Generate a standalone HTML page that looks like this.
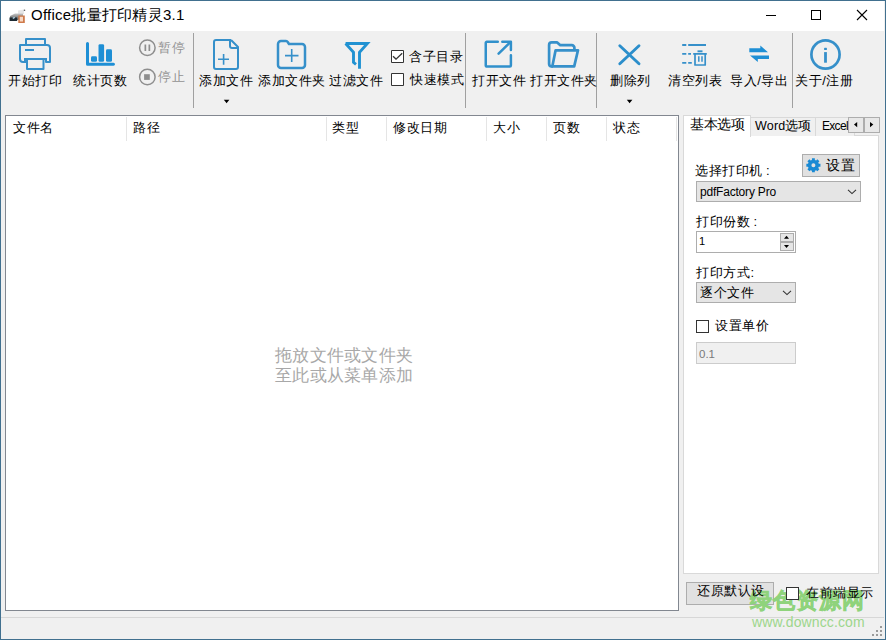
<!DOCTYPE html>
<html><head><meta charset="utf-8">
<style>
*{box-sizing:border-box;margin:0;padding:0}
html,body{width:886px;height:640px;overflow:hidden;background:#f0f0f0}
body{position:relative;font-family:"Liberation Sans",sans-serif;color:#000}
.a{position:absolute}
.t{position:absolute;white-space:nowrap;font-size:13px;line-height:16px;letter-spacing:0.6px}
.ico{position:absolute;overflow:visible}
</style></head><body>
<!-- window border -->
<div class="a" style="left:0;top:0;width:886px;height:640px;border:1px solid #41708f;"></div>
<!-- title bar -->
<div class="a" style="left:1px;top:1px;width:883px;height:30px;background:#fff"></div>
<svg class="a" style="left:0;top:0" width="30" height="30" viewBox="0 0 30 30">
<defs><linearGradient id="pg" x1="0" y1="0" x2="0" y2="1"><stop offset="0" stop-color="#c8c8c8"/><stop offset="1" stop-color="#4a4a4a"/></linearGradient></defs>
<path d="M18 10.5L24 9.5V14L18 14.5Z" fill="#e6e6e6"/>
<circle cx="24.5" cy="10.3" r="0.8" fill="#555"/>
<path d="M10 16L15 13.5H23V17L17 20.5H10Z" fill="url(#pg)"/>
<path d="M9.5 17.5H17V21H9.5Z" fill="#1d2a33"/>
<path d="M12.5 17.8L14.5 16.8L15 18L13 19Z" fill="#b9d9ea"/>
<path d="M18.3 15.5H24.8V23H18.3Z" fill="#cf7a4a"/>
<path d="M19.8 16.8H23V21.5H19.8Z" fill="#f6d9c6"/>
</svg>
<div class="t" style="left:31px;top:6px;font-size:15px;line-height:18px;letter-spacing:0.25px">Office批量打印精灵3.1</div>
<!-- window controls -->
<div class="a" style="left:766px;top:15px;width:10px;height:1px;background:#000"></div>
<div class="a" style="left:811px;top:10px;width:10px;height:10px;border:1px solid #000"></div>
<svg class="ico" style="left:856px;top:9px" width="12" height="12"><path d="M1 1L11 11M11 1L1 11" stroke="#000" stroke-width="1.1"/></svg>


<svg class="a" style="left:0;top:0" width="886" height="640" viewBox="0 0 886 640">
<g fill="none" stroke-linejoin="round" stroke-linecap="butt">
<!-- printer -->
<g stroke="#3690ca" stroke-width="2">
<path d="M26 45V39H45V45"/>
<path d="M26 62H23A3 3 0 0 1 20 59V45H47A3 3 0 0 1 50 48V62H46V59"/>
<path d="M24 59H47M25 59V62"/>
<path d="M27 59V69H43.5V59"/>
<path d="M25 50H34"/>
</g>
<!-- stats -->
<g fill="#1e8fd5" stroke="none">
<path d="M86 43.5A1.5 1.5 0 0 1 89 43.5V62.7H113.5A1.5 1.5 0 0 1 113.5 65.7H87.5A1.5 1.5 0 0 1 86 64.2Z"/>
<rect x="91" y="56.2" width="6" height="5.6" rx="1.4"/>
<rect x="98.5" y="44.2" width="5.6" height="17.6" rx="1.4"/>
<rect x="106" y="49.2" width="6" height="12.6" rx="1.4"/>
</g>
<!-- pause / stop -->
<g stroke="#8e8e8e" stroke-width="1.5">
<circle cx="147.35" cy="47.8" r="7.75"/>
<circle cx="147.35" cy="77.05" r="7.75"/>
</g>
<g fill="#8e8e8e">
<rect x="144.5" y="44.5" width="1.7" height="6.5"/>
<rect x="148.5" y="44.5" width="1.7" height="6.5"/>
<rect x="144.1" y="74.2" width="5.7" height="5.7"/>
</g>
<!-- add file -->
<g stroke="#3690ca" stroke-width="2">
<path d="M231 40H216A2 2 0 0 0 214 42V67A2 2 0 0 0 216 69H236A2 2 0 0 0 238 67V47L231 40"/>
<path d="M230 40V46A2 2 0 0 0 232 48H238"/>
</g>
<path d="M218 59.3H229M223.6 54V64.7" stroke="#3690ca" stroke-width="1.6"/>
<!-- add folder -->
<path d="M278 44A3 3 0 0 1 281 41H286A2 2 0 0 1 287.7 42L289 44H302A3 3 0 0 1 305 47V65A3 3 0 0 1 302 68H281A3 3 0 0 1 278 65Z" stroke="#3690ca" stroke-width="2.5"/>
<path d="M285 55.6H298.5M291.7 49V62" stroke="#3690ca" stroke-width="1.6"/>
<!-- filter -->
<g stroke="#2192d2" stroke-width="2.9" stroke-linejoin="miter">
<path d="M345.6 43.5H367.4L359.5 52.4V68.8"/>
<path d="M345.6 43.5L353.5 52.4V62.3L356 64.3"/>
</g>
<!-- checkboxes -->
<rect x="391.5" y="50.5" width="12" height="12" fill="#fff" stroke="#333" stroke-width="1"/>
<path d="M393 56.3L396 59.1L402.2 53.2" stroke="#333" stroke-width="1.3" stroke-linejoin="miter"/>
<rect x="391.5" y="73.5" width="12" height="12" fill="#fff" stroke="#333" stroke-width="1"/>
<!-- open file -->
<g stroke="#3090cb" stroke-width="2.5" stroke-linecap="round">
<path d="M497.8 41.75H486.9A1.1 1.1 0 0 0 485.75 42.9V65.5A1.1 1.1 0 0 0 486.9 66.6H509.8A1.1 1.1 0 0 0 510.9 65.5V55.2"/>
<path d="M502.3 41.75H510.9V50"/>
<path d="M498.6 53.6L509.3 43.2"/>
</g>
<!-- open folder -->
<g stroke="#3690ca" stroke-width="2.7">
<path d="M553 66.4H551.5A2.5 2.5 0 0 1 549.1 64V45A2.6 2.6 0 0 1 551.7 42.4H557.2L560.3 45.2H571.8A2.6 2.6 0 0 1 574.4 47.8V50.3"/>
<path d="M555.6 50.3H578L574.2 66.4H552.3Z"/>
</g>
<!-- delete X -->
<path d="M619.8 45.8L639 63.7M639 45.8L619.8 63.7" stroke="#2b8ecb" stroke-width="2.9" stroke-linecap="round"/>
<!-- clear list -->
<g stroke="#3690ca" stroke-width="1.9">
<path d="M682.2 45H686.3M688.2 45H706"/>
<path d="M682.2 53.9H686.3M688.2 53.9H691M693.2 53.9H706.8"/>
<path d="M682.2 62.9H686.3M688.2 62.9H691.8"/>
<path d="M697.5 51.3H702.5"/>
</g>
<g stroke="#3690ca" stroke-width="1.7">
<path d="M695 54V65H705.2V54"/>
<path d="M698.8 56.3V61.7M702 56.3V61.7" stroke-width="1.5"/>
</g>
<!-- import/export arrows -->
<g fill="#1e8fd5">
<path d="M749.3 48.3H760.3V45.5L768 52.3H749.3Z"/>
<path d="M769 55.5H750L757.8 62V59H769Z"/>
</g>
<!-- info -->
<circle cx="825.5" cy="54.5" r="14.1" stroke="#3690ca" stroke-width="2.7"/>
<g fill="#3690ca">
<rect x="824.1" y="47.7" width="2.8" height="2.4" rx="0.6"/>
<rect x="824.1" y="52.1" width="2.8" height="10.6"/>
</g>
<!-- dropdown arrows -->
<path d="M223.8 99.8H229.4L226.6 103.2Z" fill="#000"/>
<path d="M626.8 99.8H632.4L629.6 103.2Z" fill="#000"/>
</g>
</svg>

<!-- toolbar separators -->
<div class="a" style="left:193px;top:33px;width:1px;height:75px;background:#a0a0a0"></div>
<div class="a" style="left:465px;top:33px;width:1px;height:75px;background:#a0a0a0"></div>
<div class="a" style="left:596px;top:33px;width:1px;height:75px;background:#a0a0a0"></div>
<div class="a" style="left:792px;top:33px;width:1px;height:75px;background:#a0a0a0"></div>

<!-- toolbar labels -->
<div class="t" style="left:8px;top:73px">开始打印</div>
<div class="t" style="left:73px;top:73px">统计页数</div>
<div class="t" style="left:158px;top:40px;color:#929292">暂停</div>
<div class="t" style="left:158px;top:69px;color:#929292">停止</div>
<div class="t" style="left:199px;top:73px">添加文件</div>
<div class="t" style="left:258px;top:73px">添加文件夹</div>
<div class="t" style="left:329px;top:73px">过滤文件</div>
<div class="t" style="left:409px;top:49px">含子目录</div>
<div class="t" style="left:410px;top:72px">快速模式</div>
<div class="t" style="left:472px;top:73px">打开文件</div>
<div class="t" style="left:530px;top:73px">打开文件夹</div>
<div class="t" style="left:610px;top:73px">删除列</div>
<div class="t" style="left:668px;top:73px">清空列表</div>
<div class="t" style="left:730px;top:73px">导入/导出</div>
<div class="t" style="left:795px;top:73px">关于/注册</div>

<!-- list -->
<div class="a" style="left:5px;top:115px;width:674px;height:496px;background:#fff;border:1px solid #828790"></div>
<div class="t" style="left:13px;top:120px">文件名</div>
<div class="t" style="left:133px;top:120px">路径</div>
<div class="t" style="left:332px;top:120px">类型</div>
<div class="t" style="left:393px;top:120px">修改日期</div>
<div class="t" style="left:493px;top:120px">大小</div>
<div class="t" style="left:553px;top:120px">页数</div>
<div class="t" style="left:613px;top:120px">状态</div>
<div class="a" style="left:126px;top:117px;width:1px;height:24px;background:#e5e5e5"></div>
<div class="a" style="left:326px;top:117px;width:1px;height:24px;background:#e5e5e5"></div>
<div class="a" style="left:386px;top:117px;width:1px;height:24px;background:#e5e5e5"></div>
<div class="a" style="left:486px;top:117px;width:1px;height:24px;background:#e5e5e5"></div>
<div class="a" style="left:546px;top:117px;width:1px;height:24px;background:#e5e5e5"></div>
<div class="a" style="left:606px;top:117px;width:1px;height:24px;background:#e5e5e5"></div>
<div class="a" style="left:676px;top:117px;width:1px;height:24px;background:#e5e5e5"></div>
<div class="t" style="left:275px;top:346px;font-size:17px;line-height:20px;letter-spacing:0.3px;color:#a8a8a8">拖放文件或文件夹<br>至此或从菜单添加</div>

<!-- tab panel -->
<div class="a" style="left:683px;top:135px;width:196px;height:439px;background:#fff;border:1px solid #d9d9d9"></div>
<div class="a" style="left:683px;top:115px;width:68px;height:22px;background:#fff;border:1px solid #d9d9d9;border-bottom:none"></div>
<div class="a" style="left:750px;top:117px;width:66px;height:19px;background:#f0f0f0;border:1px solid #d9d9d9;border-bottom:none"></div>
<div class="a" style="left:815px;top:117px;width:40px;height:19px;background:#f0f0f0;border:1px solid #d9d9d9;border-bottom:none"></div>
<div class="t" style="left:690px;top:117px;font-size:13.5px;letter-spacing:-0.4px">基本选项</div>
<div class="t" style="left:755px;top:118px;letter-spacing:0"><span style="font-size:12.5px;letter-spacing:0.2px">Word</span>选项</div>
<div class="t" style="left:822px;top:118px;letter-spacing:-0.7px;width:26px;overflow:hidden;font-size:12px">Excel</div>
<div class="a" style="left:848px;top:117px;width:16px;height:16px;background:#e8e8e8;border:1px solid #adadad"></div>
<div class="a" style="left:864px;top:117px;width:16px;height:16px;background:#e8e8e8;border:1px solid #adadad"></div>

<div class="t" style="left:695px;top:163px">选择打印机<span style="margin-left:3px">:</span></div>
<div class="a" style="left:802px;top:154px;width:58px;height:23px;background:#e1e1e1;border:1px solid #adadad"></div>
<div class="t" style="left:826px;top:157.5px;font-size:13.5px;letter-spacing:1px">设置</div>
<div class="a" style="left:696px;top:181px;width:165px;height:21px;background:#e5e5e5;border:1px solid #adadad"></div>
<div class="t" style="left:700px;top:184px;font-size:12px;letter-spacing:-0.2px">pdfFactory Pro</div>
<div class="t" style="left:696px;top:214px">打印份数<span style="margin-left:3px">:</span></div>
<div class="a" style="left:696px;top:231px;width:100px;height:22px;background:#fff;border:1px solid #adadad"></div>
<div class="t" style="left:699px;top:233px;font-size:11px;letter-spacing:0">1</div>
<div class="t" style="left:696px;top:265px">打印方式:</div>
<div class="a" style="left:696px;top:282px;width:100px;height:21px;background:#e5e5e5;border:1px solid #adadad"></div>
<div class="t" style="left:700px;top:285px">逐个文件</div>
<div class="a" style="left:696px;top:320px;width:13px;height:13px;background:#fff;border:1px solid #333"></div>
<div class="t" style="left:715px;top:318px">设置单价</div>
<div class="a" style="left:696px;top:342px;width:100px;height:22px;background:#f0f0f0;border:1px solid #ccc"></div>
<div class="t" style="left:699px;top:346px;font-size:11.5px;letter-spacing:0;color:#7a7a7a">0.1</div>

<!-- bottom -->
<div class="a" style="left:686px;top:582px;width:88px;height:23px;background:#e1e1e1;border:1px solid #adadad"></div>
<div class="a" style="left:1px;top:617px;width:883px;height:1px;background:#d7d7d7"></div>
<div class="t" style="left:750px;top:586px;font-size:22px;line-height:30px;font-weight:bold;letter-spacing:1.1px;color:#8fd37c;-webkit-text-stroke:0.6px #8fd37c">绿色资源网</div>
<div class="t" style="left:752px;top:614px;font-size:14px;line-height:16px;letter-spacing:0.1px;color:#9dd68c">www.downcc.com</div>

<div class="t" style="left:697px;top:583px">还原默认设</div>
<div class="a" style="left:786px;top:587px;width:13px;height:13px;background:#fff;border:1px solid #333"></div>
<div class="t" style="left:806px;top:585px">在前端显示</div>

<svg class="a" style="left:0;top:0" width="886" height="640" viewBox="0 0 886 640">
<!-- tab scroll arrows -->
<path d="M854 124.6L857.2 122V127.2Z" fill="#000"/>
<path d="M873.3 124.6L870 122V127.2Z" fill="#000"/>
<!-- gear -->
<path fill="#1a8ad4" fill-rule="evenodd" d="M811.95 159.89 L811.95 158.25 L814.85 158.25 L814.85 159.89 L816.20 160.45 L817.36 159.29 L819.41 161.34 L818.25 162.50 L818.81 163.85 L820.45 163.85 L820.45 166.75 L818.81 166.75 L818.25 168.10 L819.41 169.26 L817.36 171.31 L816.20 170.15 L814.85 170.71 L814.85 172.35 L811.95 172.35 L811.95 170.71 L810.60 170.15 L809.44 171.31 L807.39 169.26 L808.55 168.10 L807.99 166.75 L806.35 166.75 L806.35 163.85 L807.99 163.85 L808.55 162.50 L807.39 161.34 L809.44 159.29 L810.60 160.45Z M815.4 165.3A2 2 0 1 0 811.4 165.3A2 2 0 1 0 815.4 165.3Z"/>
<!-- combo chevrons -->
<path d="M848 189.8L852 193.6L856 189.8" fill="none" stroke="#333" stroke-width="1.1"/>
<path d="M783 290.8L787 294.6L791 290.8" fill="none" stroke="#333" stroke-width="1.1"/>
<!-- spinner -->
<rect x="780.5" y="233.5" width="13" height="8" fill="#e6e6e6" stroke="#adadad"/>
<rect x="780.5" y="242.5" width="13" height="8" fill="#e6e6e6" stroke="#adadad"/>
<path d="M784 238.8H789L786.5 235.8Z" fill="#000"/>
<path d="M784 245H789L786.5 248Z" fill="#000"/>
<!-- grip -->
<g fill="#9a9a9a">
<rect x="880" y="626" width="2" height="2"/>
<rect x="876" y="630" width="2" height="2"/><rect x="880" y="630" width="2" height="2"/>
<rect x="872" y="634" width="2" height="2"/><rect x="876" y="634" width="2" height="2"/><rect x="880" y="634" width="2" height="2"/>
</g>
</svg>


</body></html>
